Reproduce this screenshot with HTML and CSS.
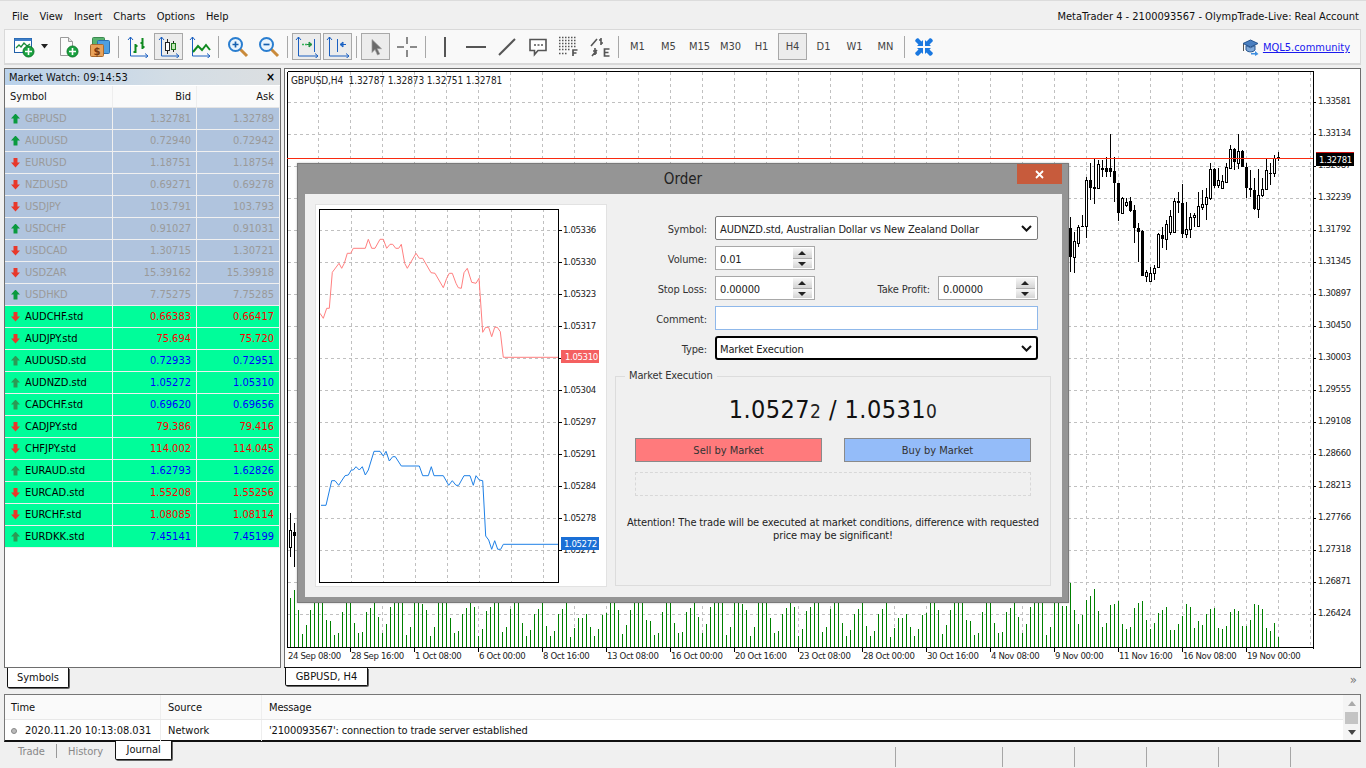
FILE: index.html
```html
<!DOCTYPE html>
<html lang="en">
<head>
<meta charset="utf-8">
<title>MetaTrader 4</title>
<link rel="stylesheet" href="styles.css">
</head>
<body>
<div class="app">
  <header class="menubar">
    <nav class="menu"><span>File</span><span>View</span><span>Insert</span><span>Charts</span><span>Options</span><span>Help</span></nav>
    <div class="window-title">MetaTrader 4 - 2100093567 - OlympTrade-Live: Real Account</div>
  </header>

  <div class="toolbar">
    <button class="tb tb-new">
      <svg width="22" height="22" viewBox="0 0 22 22"><rect x="1.5" y="2.5" width="17" height="14" fill="#fff" stroke="#1f5fa8"/><rect x="1.5" y="2.5" width="17" height="2.5" fill="#3f7fc8"/><path d="M3 12l3-3 2 2 3-4 3 3 3-2" fill="none" stroke="#1c8c3c" stroke-width="1.3"/><circle cx="15.5" cy="15.5" r="5.5" fill="#19a13f" stroke="#0d7a2a"/><path d="M15.5 12v7M12 15.5h7" stroke="#fff" stroke-width="1.6"/></svg>
      <svg width="9" height="5" viewBox="0 0 9 5"><path d="M1 0h7L4.500 4.500z" fill="#222"/></svg>
    </button>
    <button class="tb tb-doc"><svg width="22" height="22" viewBox="0 0 22 22"><path d="M3.500 1.500h8l4 4v14h-12z" fill="#fbfbfb" stroke="#9a9a9a"/><path d="M11.500 1.500v4h4" fill="#e4e4e4" stroke="#9a9a9a"/><circle cx="15.500" cy="15.500" r="5.500" fill="#19a13f" stroke="#0d7a2a"/><path d="M15.500 12v7M12 15.500h7" stroke="#fff" stroke-width="1.6"/></svg></button>
    <button class="tb"><svg width="22" height="22" viewBox="0 0 22 22"><rect x="3.500" y="1.500" width="12" height="9" rx="1" fill="#58b36f" stroke="#3c8a50"/><rect x="8.500" y="4.500" width="12" height="13" rx="1" fill="#4f9fe0" stroke="#2a6fb0"/><rect x="1.500" y="8.500" width="13" height="12" rx="1" fill="#e8a25a" stroke="#a86a30"/><text class="dollar" x="8" y="18.500">$</text></svg></button>
    <i class="sep"></i>
    <button class="tb"><svg width="22" height="22" viewBox="0 0 22 22"><path d="M3.500 1v19H21M1 4l2.500-3L6 4M18 17.500l3 2.500-3 2.500" fill="none" stroke="#1a5fc0"/><path d="M8.500 8v9M6.500 16h2M8.500 10h2M15.500 2v11M13.500 7h2M15.500 11h2" fill="none" stroke="#0f8a1f" stroke-width="2"/></svg></button>
    <button class="tb pressed"><svg width="22" height="22" viewBox="0 0 22 22"><path d="M3.500 1v19H21M1 4l2.500-3L6 4M18 17.500l3 2.500-3 2.500" fill="none" stroke="#1a5fc0"/><path d="M9.500 3v15M15.500 5v11" stroke="#222"/><rect x="7.500" y="6.500" width="4" height="8" fill="#fff" stroke="#222"/><rect x="13.500" y="7.500" width="4" height="6" fill="#bfe6b5" stroke="#1c7a1c"/></svg></button>
    <button class="tb"><svg width="22" height="22" viewBox="0 0 22 22"><path d="M3.500 1v19H21M1 4l2.500-3L6 4M18 17.500l3 2.500-3 2.500" fill="none" stroke="#1a5fc0"/><path d="M4 16l5-6 4 4 4-5 4 5" fill="none" stroke="#0f8a1f" stroke-width="2"/></svg></button>
    <i class="sep"></i>
    <button class="tb"><svg width="22" height="22" viewBox="0 0 22 22"><path d="M13 13l7 7" stroke="#c98a3a" stroke-width="3"/><circle cx="8.500" cy="8.500" r="6.500" fill="#eaf4fd" stroke="#2a7ed0" stroke-width="2"/><path d="M8.500 5.500v6M5.500 8.500h6" stroke="#1660b0" stroke-width="1.700"/></svg></button>
    <button class="tb"><svg width="22" height="22" viewBox="0 0 22 22"><path d="M13 13l7 7" stroke="#c98a3a" stroke-width="3"/><circle cx="8.500" cy="8.500" r="6.500" fill="#eaf4fd" stroke="#2a7ed0" stroke-width="2"/><path d="M5.500 8.500h6" stroke="#1660b0" stroke-width="1.700"/></svg></button>
    <i class="sep"></i>
    <button class="tb pressed"><svg width="24" height="22" viewBox="0 0 24 22"><path d="M3.500 1v19H23M1 4l2.500-3L6 4M20 17.500l3 2.500-3 2.500M19.500 3v13" fill="none" stroke="#1a5fc0"/><path d="M7 8.500h5" stroke="#35b35a" stroke-width="1.500" stroke-dasharray="2 1"/><path d="M12 8.500h4M14 6l3 2.500-3 2.500z" fill="#35b35a" stroke="#1d8c3e"/></svg></button>
    <button class="tb pressed"><svg width="24" height="22" viewBox="0 0 24 22"><path d="M3.500 1v19H23M1 4l2.500-3L6 4M20 17.500l3 2.500-3 2.500M11.500 3v13" fill="none" stroke="#1a5fc0"/><path d="M15 8.500h5M17 6l-3 2.500 3 2.500z" fill="#3f8fe0" stroke="#1a5fc0"/></svg></button>
    <i class="sep"></i>
    <button class="tb pressed"><svg width="14" height="18" viewBox="0 0 14 18"><path d="M3 1.500v13l3-3 2.500 5.500 2.200-1-2.500-5.300H12.500z" fill="#6a6a6a" stroke="#9a9a9a" stroke-width=".7"/></svg></button>
    <button class="tb"><svg width="20" height="20" viewBox="0 0 20 20"><path d="M10 0v7M10 13v7M0 10h7M13 10h7" stroke="#666" stroke-width="1.500"/></svg></button>
    <i class="sep"></i>
    <button class="tb"><svg width="4" height="22" viewBox="0 0 4 22"><path d="M2 1v20" stroke="#555" stroke-width="2"/></svg></button>
    <button class="tb"><svg width="20" height="4" viewBox="0 0 20 4"><path d="M0 2h20" stroke="#555" stroke-width="2"/></svg></button>
    <button class="tb"><svg width="18" height="18" viewBox="0 0 18 18"><path d="M1 17L17 1" stroke="#555" stroke-width="2"/></svg></button>
    <button class="tb"><svg width="20" height="20" viewBox="0 0 20 20"><path d="M2 2.500h16v11h-8l-3.500 4v-4H2z" fill="#fff" stroke="#555" stroke-width="1.600"/><path d="M6 8h2M9.500 8h2M13 8h2" stroke="#555" stroke-width="1.500"/></svg></button>
    <button class="tb"><svg width="21" height="21" viewBox="0 0 21 21"><path d="M1 1.500h18M1 4.500h18M1 7.500h18M1 10.500h18M1 13.500h11M1 17.500h8" stroke="#555" stroke-width="1.500" stroke-dasharray="1.500 1.500"/><path d="M15 20v-6h4.500M15 17h3.500" fill="none" stroke="#555" stroke-width="1.700"/></svg></button>
    <button class="tb"><svg width="22" height="22" viewBox="0 0 22 22"><path d="M2 10l6-7M3 20l5-6M12 2v7M10 4h2M12 7h2M6 12v7M4 15h2M6 17h2" fill="none" stroke="#555" stroke-width="1.600"/><path d="M20.500 13H15.500v7H20.500M15.500 16.500h4" fill="none" stroke="#555" stroke-width="1.700"/></svg></button>
    <i class="sep"></i>
    <button class="tb period">M1</button>
    <button class="tb period">M5</button>
    <button class="tb period">M15</button>
    <button class="tb period">M30</button>
    <button class="tb period">H1</button>
    <button class="tb period pressed">H4</button>
    <button class="tb period">D1</button>
    <button class="tb period">W1</button>
    <button class="tb period">MN</button>
    <i class="sep"></i>
    <button class="tb"><svg width="18" height="18" viewBox="0 0 18 18"><path d="M1 1l2-1 3.500 3.500L8 2v6H2l1.500-1.500L0 3zM17 1l-2-1-3.500 3.500L10 2v6h6l-1.500-1.500L18 3zM1 17l2 1 3.500-3.500L8 16v-6H2l1.500 1.500L0 15zM17 17l-2 1-3.500-3.500L10 16v-6h6l-1.500 1.500L18 15z" fill="#1a78e0"/></svg></button>
    <div class="community">
      <svg width="17" height="17" viewBox="0 0 17 17"><path d="M8.500 1L16 4.500 8.500 8 1 4.500z" fill="#4a7fc0" stroke="#27558f"/><path d="M4 6.500V11c2 2.500 7 2.500 9 0V6.500L8.500 8.700z" fill="#7fa8d8" stroke="#27558f"/><path d="M1.500 5v7" stroke="#555"/><path d="M9 14h4v-2l3.500 3L13 17v-1.500H9z" fill="#3f8fe0"/></svg>
      <a class="link" href="#">MQL5.community</a>
    </div>
  </div>

  <main class="workspace">
    <section class="watch-col">
      <div class="watch">
        <div class="watch-title"><span>Market Watch: 09:14:53</span><b>×</b></div>
        <div class="watch-grid">
          <div class="wh">Symbol</div><div class="wh num">Bid</div><div class="wh num">Ask</div>
          <div class="c off"><i class="up"></i>GBPUSD</div><div class="c off num">1.32781</div><div class="c off num">1.32789</div>
          <div class="c off"><i class="up"></i>AUDUSD</div><div class="c off num">0.72940</div><div class="c off num">0.72942</div>
          <div class="c off"><i class="down"></i>EURUSD</div><div class="c off num">1.18751</div><div class="c off num">1.18754</div>
          <div class="c off"><i class="down"></i>NZDUSD</div><div class="c off num">0.69271</div><div class="c off num">0.69278</div>
          <div class="c off"><i class="down"></i>USDJPY</div><div class="c off num">103.791</div><div class="c off num">103.793</div>
          <div class="c off"><i class="up"></i>USDCHF</div><div class="c off num">0.91027</div><div class="c off num">0.91031</div>
          <div class="c off"><i class="down"></i>USDCAD</div><div class="c off num">1.30715</div><div class="c off num">1.30721</div>
          <div class="c off"><i class="down"></i>USDZAR</div><div class="c off num">15.39162</div><div class="c off num">15.39918</div>
          <div class="c off"><i class="up"></i>USDHKD</div><div class="c off num">7.75275</div><div class="c off num">7.75285</div>
          <div class="c on"><i class="down"></i>AUDCHF.std</div><div class="c on num red">0.66383</div><div class="c on num red">0.66417</div>
          <div class="c on"><i class="down"></i>AUDJPY.std</div><div class="c on num red">75.694</div><div class="c on num red">75.720</div>
          <div class="c on"><i class="up"></i>AUDUSD.std</div><div class="c on num blue">0.72933</div><div class="c on num blue">0.72951</div>
          <div class="c on"><i class="up"></i>AUDNZD.std</div><div class="c on num blue">1.05272</div><div class="c on num blue">1.05310</div>
          <div class="c on"><i class="up"></i>CADCHF.std</div><div class="c on num blue">0.69620</div><div class="c on num blue">0.69656</div>
          <div class="c on"><i class="down"></i>CADJPY.std</div><div class="c on num red">79.386</div><div class="c on num red">79.416</div>
          <div class="c on"><i class="down"></i>CHFJPY.std</div><div class="c on num red">114.002</div><div class="c on num red">114.045</div>
          <div class="c on"><i class="up"></i>EURAUD.std</div><div class="c on num blue">1.62793</div><div class="c on num blue">1.62826</div>
          <div class="c on"><i class="down"></i>EURCAD.std</div><div class="c on num red">1.55208</div><div class="c on num red">1.55256</div>
          <div class="c on"><i class="down"></i>EURCHF.std</div><div class="c on num red">1.08085</div><div class="c on num red">1.08114</div>
          <div class="c on"><i class="up"></i>EURDKK.std</div><div class="c on num blue">7.45141</div><div class="c on num blue">7.45199</div>
        </div>
      </div>
      <div class="tab tab-symbols">Symbols</div>
    </section>
    <section class="chart-col">
      <div class="chart-panel"><svg id="mainChart" class="chart" width="1077" height="600" viewBox="284 68 1077 600"></svg></div>
      <div class="chart-tabs"><div class="tab tab-chart">GBPUSD, H4</div><span class="more">»</span></div>
    </section>
  </main>

  <section class="journal">
    <div class="journal-head"><div class="jt">Time</div><div class="js">Source</div><div class="jm">Message</div></div>
    <div class="journal-row"><div class="jt"><i class="dot"></i>2020.11.20 10:13:08.031</div><div class="js">Network</div><div class="jm">'2100093567': connection to trade server established</div></div>
    <div class="scrollbar"><i class="sb-up"></i><i class="sb-thumb"></i><i class="sb-down"></i></div>
  </section>

  <footer class="statusbar">
    <div class="tabs-bottom"><span class="tb-text">Trade</span><i class="vsep"></i><span class="tb-text">History</span><div class="tab tab-journal">Journal</div></div>
    <div class="status-cells"><i></i><i></i><i></i><i></i><i></i><i></i></div>
  </footer>

  <div class="dialog">
    <div class="dialog-title"><span>Order</span><button class="close"><svg width="9" height="9" viewBox="0 0 9 9"><path d="M1 1l7 7M8 1L1 8" stroke="#fff" stroke-width="1.800"/></svg></button></div>
    <div class="dialog-body">
      <div class="tick-panel"><svg id="tickChart" class="chart" width="290" height="381" viewBox="316 205 290 381"></svg></div>
      <div class="order-col">
        <div class="form">
          <label>Symbol:</label>
          <div class="field select span">AUDNZD.std, Australian Dollar vs New Zealand Dollar<svg class="chev" width="11" height="7" viewBox="0 0 11 7"><path d="M1 1l4.500 4.500L10 1" fill="none" stroke="#111" stroke-width="2"/></svg></div>
          <label>Volume:</label>
          <div class="field spin">0.01<span class="spinner"><i class="s-up"></i><i class="s-down"></i></span></div>
          <span class="span2"></span>
          <label>Stop Loss:</label>
          <div class="field spin">0.00000<span class="spinner"><i class="s-up"></i><i class="s-down"></i></span></div>
          <label class="tp">Take Profit:</label>
          <div class="field spin">0.00000<span class="spinner"><i class="s-up"></i><i class="s-down"></i></span></div>
          <label>Comment:</label>
          <div class="field comment span"></div>
          <label>Type:</label>
          <div class="field select type span">Market Execution<svg class="chev" width="11" height="7" viewBox="0 0 11 7"><path d="M1 1l4.500 4.500L10 1" fill="none" stroke="#111" stroke-width="2"/></svg></div>
        </div>
        <div class="group">
          <span class="legend">Market Execution</span>
          <div class="quote">1.0527<small>2</small> / 1.0531<small>0</small></div>
          <div class="actions"><button class="act sell">Sell by Market</button><button class="act buy">Buy by Market</button></div>
          <div class="progress"></div>
          <p class="note">Attention! The trade will be executed at market conditions, difference with requested price may be significant!</p>
        </div>
      </div>
    </div>
  </div>
</div>
<script src="chart.js"></script>
</body>
</html>
```
FILE: styles.css
```css
* { box-sizing: border-box; }
html, body { margin: 0; padding: 0; }
body { width: 1366px; height: 768px; overflow: hidden; background: #f0f0f0; color: #111; font: 11px/13px "DejaVu Sans Condensed", "DejaVu Sans", sans-serif; }
button { font: inherit; color: inherit; padding: 0; margin: 0; border: 0; background: none; }
i { display: block; font-style: normal; }

.app { position: relative; width: 1366px; height: 768px; display: flex; flex-direction: column; border-top: 1px solid #dcdcdc; }

.menubar { height: 28px; display: flex; align-items: center; justify-content: space-between; padding: 2px 7px 0 12px; }
.menu { display: flex; gap: 11px; }
.toolbar { height: 36px; margin: 0 5px 0 4px; padding: 0 0 0 3px; display: flex; align-items: center; gap: 2px; background: #f9f9f9; border: 1px solid #d9d9d9; border-bottom-width: 2px; }
.tb { flex: none; width: 29px; height: 27px; display: flex; align-items: center; justify-content: center; border: 1px solid transparent; }
.tb-new { width: 44px; gap: 5px; justify-content: flex-start; padding-left: 4px; }
.tb-doc { justify-content: flex-start; padding-left: 2px; }
.tb.pressed { background: #ececec; border-color: #a8a8a8; }
.sep { flex: none; width: 1px; height: 22px; margin: 0 2px; background: #a8a8a8; }
.period { color: #444; }
.dollar { font: bold 10px "DejaVu Sans", sans-serif; fill: #7a3a10; text-anchor: middle; }
.community { margin-left: auto; padding: 2px 10px 0 0; display: flex; align-items: center; gap: 4px; }
.link { color: #1a1aee; text-decoration: underline; }

.workspace { height: 629px; padding: 3px 5px 0 4px; display: flex; gap: 3px; }
.watch-col { flex: none; width: 277px; }
.watch { height: 600px; border: 1px solid #6e6e6e; background: #fff; }
.watch-title { height: 16px; display: flex; align-items: center; justify-content: space-between; padding: 0 5px 0 4px; background: linear-gradient(90deg, #b9d1ea 0%, #d3dde5 60%, #dcdfe1 100%); }
.watch-title b { color: #000; font-size: 12px; line-height: 12px; }
.watch-grid { display: grid; grid-template-columns: 108px 84px 83px; grid-auto-rows: 22px; padding-top: 1px; }
.wh { display: flex; align-items: center; padding: 0 5px; background: #fafafa; border-right: 1px solid #eee; border-bottom: 1px solid #e4e4e4; }
.num { justify-content: flex-end; text-align: right; }
.c { display: flex; align-items: center; padding: 0 5px; border-right: 1px solid #f0f0f0; border-bottom: 1px solid #f0f0f0; }
.wh, .c { height: 22px; }
.c:not(.num) { padding-left: 6px; gap: 5px; }
.off { background: #b0c4de; color: #9a9a9a; }
.on { background: #00fd9a; color: #000; }
.red { color: #f00; }
.blue { color: #00f; }
.up, .down { flex: none; width: 9px; height: 10px; }
.up { background: #0a9a3e; clip-path: polygon(50% 0, 100% 50%, 72% 50%, 72% 100%, 28% 100%, 28% 50%, 0 50%); }
.down { background: #e8382a; clip-path: polygon(28% 0, 72% 0, 72% 50%, 100% 50%, 50% 100%, 0 50%, 28% 50%); }
.on .up { background: #2c9a55; }

.tab { position: relative; background: #fff; border: 1px solid #111; border-top: 0; border-radius: 0 0 2px 2px; text-align: center; box-shadow: 1px 1px 0 #666; }
.tab-symbols { width: 62px; margin-left: 3px; height: 20px; line-height: 20px; }
.chart-col { flex: none; width: 1077px; }
.chart-panel { height: 600px; background: #fff; }
.chart { display: block; }
.chart-tabs { display: flex; justify-content: space-between; align-items: flex-start; padding: 0 4px 0 1px; }
.tab-chart { width: 83px; height: 18px; line-height: 18px; }
.more { color: #777; font-size: 13px; padding-top: 5px; }

.axis { font: 9.500px "DejaVu Sans Condensed", "DejaVu Sans", sans-serif; letter-spacing: -.35px; fill: #222; }
.axis.head { font-size: 10px; letter-spacing: -.12px; white-space: pre; }
.axis.light { fill: #fff; }

.journal { position: relative; height: 48px; margin: 0 5px 0 4px; background: #fff; border: 1px solid #777; border-bottom: 2px solid #111; padding-right: 17px; white-space: nowrap; }
.journal-head, .journal-row { display: flex; align-items: center; }
.journal-head { height: 25px; background: #fafafa; border-bottom: 1px solid #e8e8e8; }
.journal-row { height: 21px; }
.jt { width: 156px; height: 100%; padding-left: 6px; display: flex; align-items: center; gap: 8px; border-right: 1px solid #eee; }
.js { width: 101px; height: 100%; padding-left: 7px; display: flex; align-items: center; border-right: 1px solid #eee; }
.jm { padding-left: 7px; letter-spacing: -.15px; }
.dot { width: 6px; height: 6px; border-radius: 50%; background: #bbb; border: 1px solid #888; }
.scrollbar { position: absolute; right: 0; top: 0; bottom: 0; width: 17px; background: #f4f4f4; display: flex; flex-direction: column; align-items: center; justify-content: space-between; padding: 6px 0 5px; }
.sb-up { width: 0; height: 0; border: 4px solid transparent; border-top: 0; border-bottom: 5px solid #aaa; }
.sb-down { width: 0; height: 0; border: 4px solid transparent; border-bottom: 0; border-top: 5px solid #444; }
.sb-thumb { width: 13px; height: 12px; background: #c4c4c4; }

.statusbar { flex: 1; display: flex; justify-content: space-between; padding-left: 18px; }
.tabs-bottom { display: flex; align-items: flex-start; color: #888; }
.tb-text { margin-top: 3px; }
.vsep { width: 1px; height: 14px; margin: 2px 11px 0; background: #999; }
.tab-journal { width: 57px; height: 19px; line-height: 18px; margin-left: 12px; margin-top: -1px; color: #111; }
.status-cells { width: 471px; height: 20px; margin-top: 5px; display: flex; }
.status-cells i { width: 1px; height: 20px; background: #a6a6a6; }
.status-cells i:first-child { margin-right: 106px; }
.status-cells i:nth-child(n+2):nth-child(-n+5) { margin-right: 71px; }

.dialog { position: absolute; left: 297px; top: 162px; width: 772px; height: 440px; background: #959595; border: 1px solid #7a7a7a; box-shadow: 0 0 2px rgba(0,0,0,.25); }
.dialog-title { position: relative; height: 30px; display: flex; align-items: center; justify-content: center; font-size: 15px; color: #222; }
.close { position: absolute; right: 6px; top: 0; width: 45px; height: 20px; background: #c75b3c; display: flex; align-items: center; justify-content: center; }
.dialog-body { margin: 0 6px 0 7px; height: 403px; background: #f0f0f0; padding: 11px 0 0 11px; display: flex; gap: 9px; }
.tick-panel { flex: none; width: 290px; height: 381px; background: #fff; box-shadow: 0 0 0 1px #e2e2e2; }
.order-col { flex: none; width: 436px; letter-spacing: -.13px; }
.form { margin-top: 11px; display: grid; grid-template-columns: 92px 100px 1fr 100px; grid-auto-rows: 24px; gap: 6px 8px; align-items: center; padding-right: 13px; color: #333; }
.form label { text-align: right; padding-top: 2px; }
.form .tp { justify-self: end; }
.span { grid-column: 2 / 5; }
.span2 { grid-column: 3 / 5; }
.field { position: relative; height: 24px; display: flex; align-items: center; padding: 2px 0 0 4px; background: #fff; border: 1px solid #a8a8a8; color: #222; }
.select { border-color: #7a7a7a; border-radius: 2px; }
.chev { position: absolute; right: 5px; top: 8px; }
.type { border: 2px solid #000; border-radius: 3px; padding-left: 3px; }
.type .chev { top: 7px; right: 4px; }
.comment { border-color: #8fb8ea; }
.spinner { position: absolute; right: 2px; top: 1px; bottom: 1px; width: 19px; display: flex; flex-direction: column; gap: 1px; background: #aaa; }
.s-up, .s-down { flex: 1; background: linear-gradient(#f6f6f6, #d4d4d4); position: relative; }
.s-up::after, .s-down::after { content: ""; position: absolute; left: 5px; top: 3px; width: 0; height: 0; border: 4px solid transparent; }
.s-up::after { border-top: 0; border-bottom: 4px solid #222; }
.s-down::after { border-bottom: 0; border-top: 4px solid #222; }

.group { position: relative; margin-top: 16px; height: 210px; border: 1px solid #dcdcdc; padding: 0 19px; text-align: center; color: #333; }
.legend { position: absolute; left: 9px; top: -8px; padding: 0 4px; background: #f0f0f0; }
.quote { margin-top: 17px; height: 32px; font-size: 25px; line-height: 32px; color: #111; letter-spacing: .45px; }
.quote small { font-size: 19px; color: #222; }
.actions { margin-top: 12px; display: flex; justify-content: space-between; }
.act { width: 187px; height: 24px; border: 1px solid #8a8a8a; }
.sell { background: #ff7a7c; }
.buy { background: #94bcf9; }
.progress { margin-top: 10px; height: 24px; border: 1px dashed #d8d8d8; }
.note { margin: 20px -10px 0; line-height: 13px; color: #222; }
```
FILE: chart.js
```js
var NS = "http://www.w3.org/2000/svg";
function el(svg, name, attrs, text) {
  var n = document.createElementNS(NS, name);
  for (var k in attrs) n.setAttribute(k, attrs[k]);
  if (text !== undefined) n.textContent = text;
  svg.appendChild(n);
  return n;
}
function line(svg, x1, y1, x2, y2, color, extra) {
  var a = { x1: x1, y1: y1, x2: x2, y2: y2, stroke: color, "stroke-width": 1, "shape-rendering": "crispEdges" };
  if (extra) a["stroke-dasharray"] = extra;
  el(svg, "line", a);
}
function label(svg, x, y, t, cls) { el(svg, "text", { x: x, y: y, "class": cls || "axis" }, t); }

/* ---------- main GBPUSD chart ---------- */
var m = document.getElementById("mainChart");
var L = 287.5, R = 1313.5, T = 71.5, B = 647.5;
var GRID = "#c0c0c0", DASH = "3 3";
for (var gx = 318; gx <= 1310; gx += 32) line(m, gx + .5, T, gx + .5, B, GRID, DASH);
for (var gy = 102; gy <= 614; gy += 32) line(m, L, gy + .5, R, gy + .5, GRID, DASH);

/* volumes, px tall, left to right from x=294 */
var volLeft = [57,37,13,22,37,50,60,50,27,26,12,14,35,46,44,24,14,15,35,39,48,30,14,23,40,47,52,45,12,20,46,48,43,37,11,20,44,50,46,29,14,16,33,39,50,40,11,18,36,40,46,50,15,20,38,45,47,24,11,17,33,38,44,21,11,16,33,38,46,10,19,29,29,33,20,11,18,32,34,50];
var volRight = [41,41,64,37,23,32,47,51,58,36,20,24,42,43,46,23,18,20,39,44,46,27,18,24,34,37,40,17,17,23,31,43,40,19,26,22,33,38,39,19,18,21,35,38,36,21,21,27,43,42,38,19,16,24,10];
var vx = 290, i;
line(m, vx + .5, 647, vx + .5, 598, "#008000");
for (i = 0; vx + 4 * (i + 1) < 1062; i++) {
  var h = volLeft[i % volLeft.length], x0 = 294 + 4 * i;
  line(m, x0 + .5, 647, x0 + .5, 647 - h, "#008000");
}
for (i = 0; i < volRight.length; i++) {
  var xr = 1278 - 4 * (volRight.length - 1 - i);
  line(m, xr + .5, 647, xr + .5, 647 - volRight[i], "#008000");
}

/* candles: [x, wickTop, wickBottom, bodyTop, bodyBottom, black] */
var zc = [
[1116,455,482,472,476,1],[1104,465,530,475,518,0],[1092,490,555,518,522,1],[1080,475,570,510,568,0],[1068,535,590,568,584,0],
[1056,508,655,585,628,0],[1044,535,630,570,628,1],[1032,510,590,565,570,1],[1020,490,595,502,565,1],[1008,450,502,452,500,1],
[996,402,508,452,488,0],[984,445,510,447,485,1],[972,435,505,448,503,0],[960,490,545,502,545,0],[948,525,565,543,563,0],
[936,505,565,540,555,0],[924,505,565,507,558,1],[912,490,600,508,595,0],[900,565,660,592,613,0],[888,570,630,613,620,0],
[876,575,678,618,677,0],[864,640,680,646,652,0],[852,640,715,652,688,0],[840,605,715,688,703,0],[828,552,715,608,703,1],
[816,575,640,603,610,1],[804,595,700,603,695,0],[792,630,705,648,695,0],[780,660,750,672,718,0],[768,680,745,705,718,1],
[756,700,805,703,802,0],[744,795,840,805,820,0],[732,800,846,820,844,0],[720,810,845,815,827,0],[708,690,828,693,827,1],
[696,670,785,685,695,1],[684,615,728,630,683,1],[672,590,635,602,632,1],[660,595,620,605,615,0],[648,590,642,594,640,0],
[636,550,662,550,640,1],[624,470,605,512,548,1],[612,402,530,505,515,1],[600,470,530,505,515,1],[588,480,530,505,510,1],
[576,480,565,492,565,0],[564,475,612,562,566,1],[552,488,600,540,563,1],[540,530,715,540,677,0],[528,645,680,678,682,1],
[516,675,740,680,728,0],[504,695,818,722,770,0],[492,650,815,685,770,1]];
function candle(x, wt, wb, bt, bb, black) {
  line(m, x + .5, wt, x + .5, wb, "#000");
  if (black) {
    el(m, "rect", { x: x - 1, y: bt, width: 3, height: Math.max(1, bb - bt), fill: "#000", "shape-rendering": "crispEdges" });
  } else {
    el(m, "rect", { x: x - .5, y: bt + .5, width: 2, height: Math.max(1, bb - bt), fill: "#fff", stroke: "#000", "stroke-width": 1, "shape-rendering": "crispEdges" });
  }
}
zc.forEach(function (c) {
  candle(Math.round(906 + c[0] / 3), Math.round(c[1] / 3), Math.round(c[2] / 3), Math.round(c[3] / 3), Math.round(c[4] / 3), c[5]);
});
candle(290, 513, 557, 530, 547, 0);
candle(294, 523, 567, 532, 536, 1);

/* frame */
line(m, 284.5, 68, 284.5, 668, "#6e6e6e");
line(m, 284, 68.5, 1361, 68.5, "#6e6e6e");
line(m, 1360.5, 68, 1360.5, 668, "#6e6e6e");
line(m, 284, 667.5, 1361, 667.5, "#111");
line(m, L, T, R, T, "#000");
line(m, L, T, L, B, "#000");
line(m, R, T, R, B + 1, "#000");
line(m, L, B, R, B, "#000");

/* price axis: the third price sits behind the bid label, as on the terminal */
var prices = ["1.33581","1.33134","1.32687","1.32239","1.31792","1.31345","1.30897","1.30450","1.30003","1.29555","1.29108","1.28660","1.28213","1.27766","1.27318","1.26871","1.26424"];
prices.forEach(function (p, k) {
  var y = 102 + 32 * k;
  line(m, 1313, y + .5, 1316, y + .5, "#000");
  label(m, 1318, y + 2, p);
});

/* time axis */
var times = ["24 Sep 08:00","28 Sep 16:00","1 Oct 08:00","6 Oct 00:00","8 Oct 16:00","13 Oct 08:00","16 Oct 00:00","20 Oct 16:00","23 Oct 08:00","28 Oct 00:00","30 Oct 16:00","4 Nov 08:00","9 Nov 00:00","11 Nov 16:00","16 Nov 08:00","19 Nov 00:00"];
times.forEach(function (t, k) {
  var x = 286 + 64 * k;
  if (k) line(m, x + .5, 647, x + .5, 652, "#000");
  label(m, k ? x + 1 : x + 2, 659, t);
});

label(m, 291, 84, "GBPUSD,H4  1.32787 1.32873 1.32751 1.32781", "axis head");

/* bid line and label */
line(m, 287, 158.5, 1313, 158.5, "#f82a10");
el(m, "rect", { x: 1316, y: 152, width: 38, height: 14, fill: "#000" });
line(m, 1316, 152.5, 1354, 152.5, "#d01010");
label(m, 1319, 163, "1.32781", "axis light");

/* ---------- tick chart ---------- */
var t = document.getElementById("tickChart");
var gxS, gyS;
for (gxS = 351; gxS <= 543; gxS += 32) line(t, gxS + .5, 209, gxS + .5, 582, GRID, DASH);
for (gyS = 230; gyS <= 550; gyS += 32) line(t, 319, gyS + .5, 558, gyS + .5, GRID, DASH);

var red = [[90,490],[100,505],[110,475],[118,475],[127,367],[147,340],[155,355],[163,340],[172,310],[182,310],[190,295],[226,295],[235,268],[245,295],[255,295],[270,268],[280,268],[290,295],[300,283],[308,283],[317,295],[326,295],[334,283],[344,340],[352,355],[378,310],[388,325],[398,325],[423,368],[435,370],[460,413],[470,385],[478,370],[487,370],[498,400],[505,413],[514,415],[522,368],[532,355],[545,397],[558,400],[567,385],[578,547],[587,532],[596,532],[605,560],[614,532],[622,532],[631,545],[640,622],[805,622]];
var blue = [[93,376],[108,376],[125,302],[135,302],[146,316],[165,287],[175,285],[184,270],[190,270],[198,260],[208,270],[217,260],[226,285],[235,270],[252,214],[270,214],[280,228],[288,214],[298,243],[308,230],[316,230],[334,258],[388,258],[398,287],[415,287],[424,260],[432,287],[460,287],[476,316],[487,302],[498,316],[506,316],[522,287],[540,287],[550,316],[558,287],[568,300],[578,302],[587,468],[596,480],[605,508],[614,482],[623,508],[632,508],[640,493],[805,493]];
function poly(pts, oy, color) {
  el(t, "polyline", { points: pts.map(function (p) { return (290 + p[0] / 3).toFixed(1) + "," + (oy + p[1] / 3).toFixed(1); }).join(" "), fill: "none", stroke: color, "stroke-width": 1 });
}
poly(red, 150, "#ff7f7f");
poly(blue, 380, "#1e80e6");

["1.05336","1.05330","1.05323","1.05317",null,"1.05304","1.05297","1.05291","1.05284","1.05278","1.05271"].forEach(function (p, k) {
  var y = 230 + 32 * k;
  line(t, 558, y + .5, 562, y + .5, "#000");
  if (p) label(t, 563, y + 3, p);
});
[[319.5,209,319.5,582],[558.5,209,558.5,582],[319,209.5,559,209.5],[319,582.500,559,582.500]].forEach(function (f) { line(t, f[0], f[1], f[2], f[3], "#000"); });

el(t, "rect", { x: 561, y: 350, width: 38, height: 13, fill: "#f46060" });
label(t, 565, 360, "1.05310", "axis light");
el(t, "rect", { x: 561, y: 537, width: 38, height: 13, fill: "#1a6fd6" });
label(t, 564, 547, "1.05272", "axis light");
```
